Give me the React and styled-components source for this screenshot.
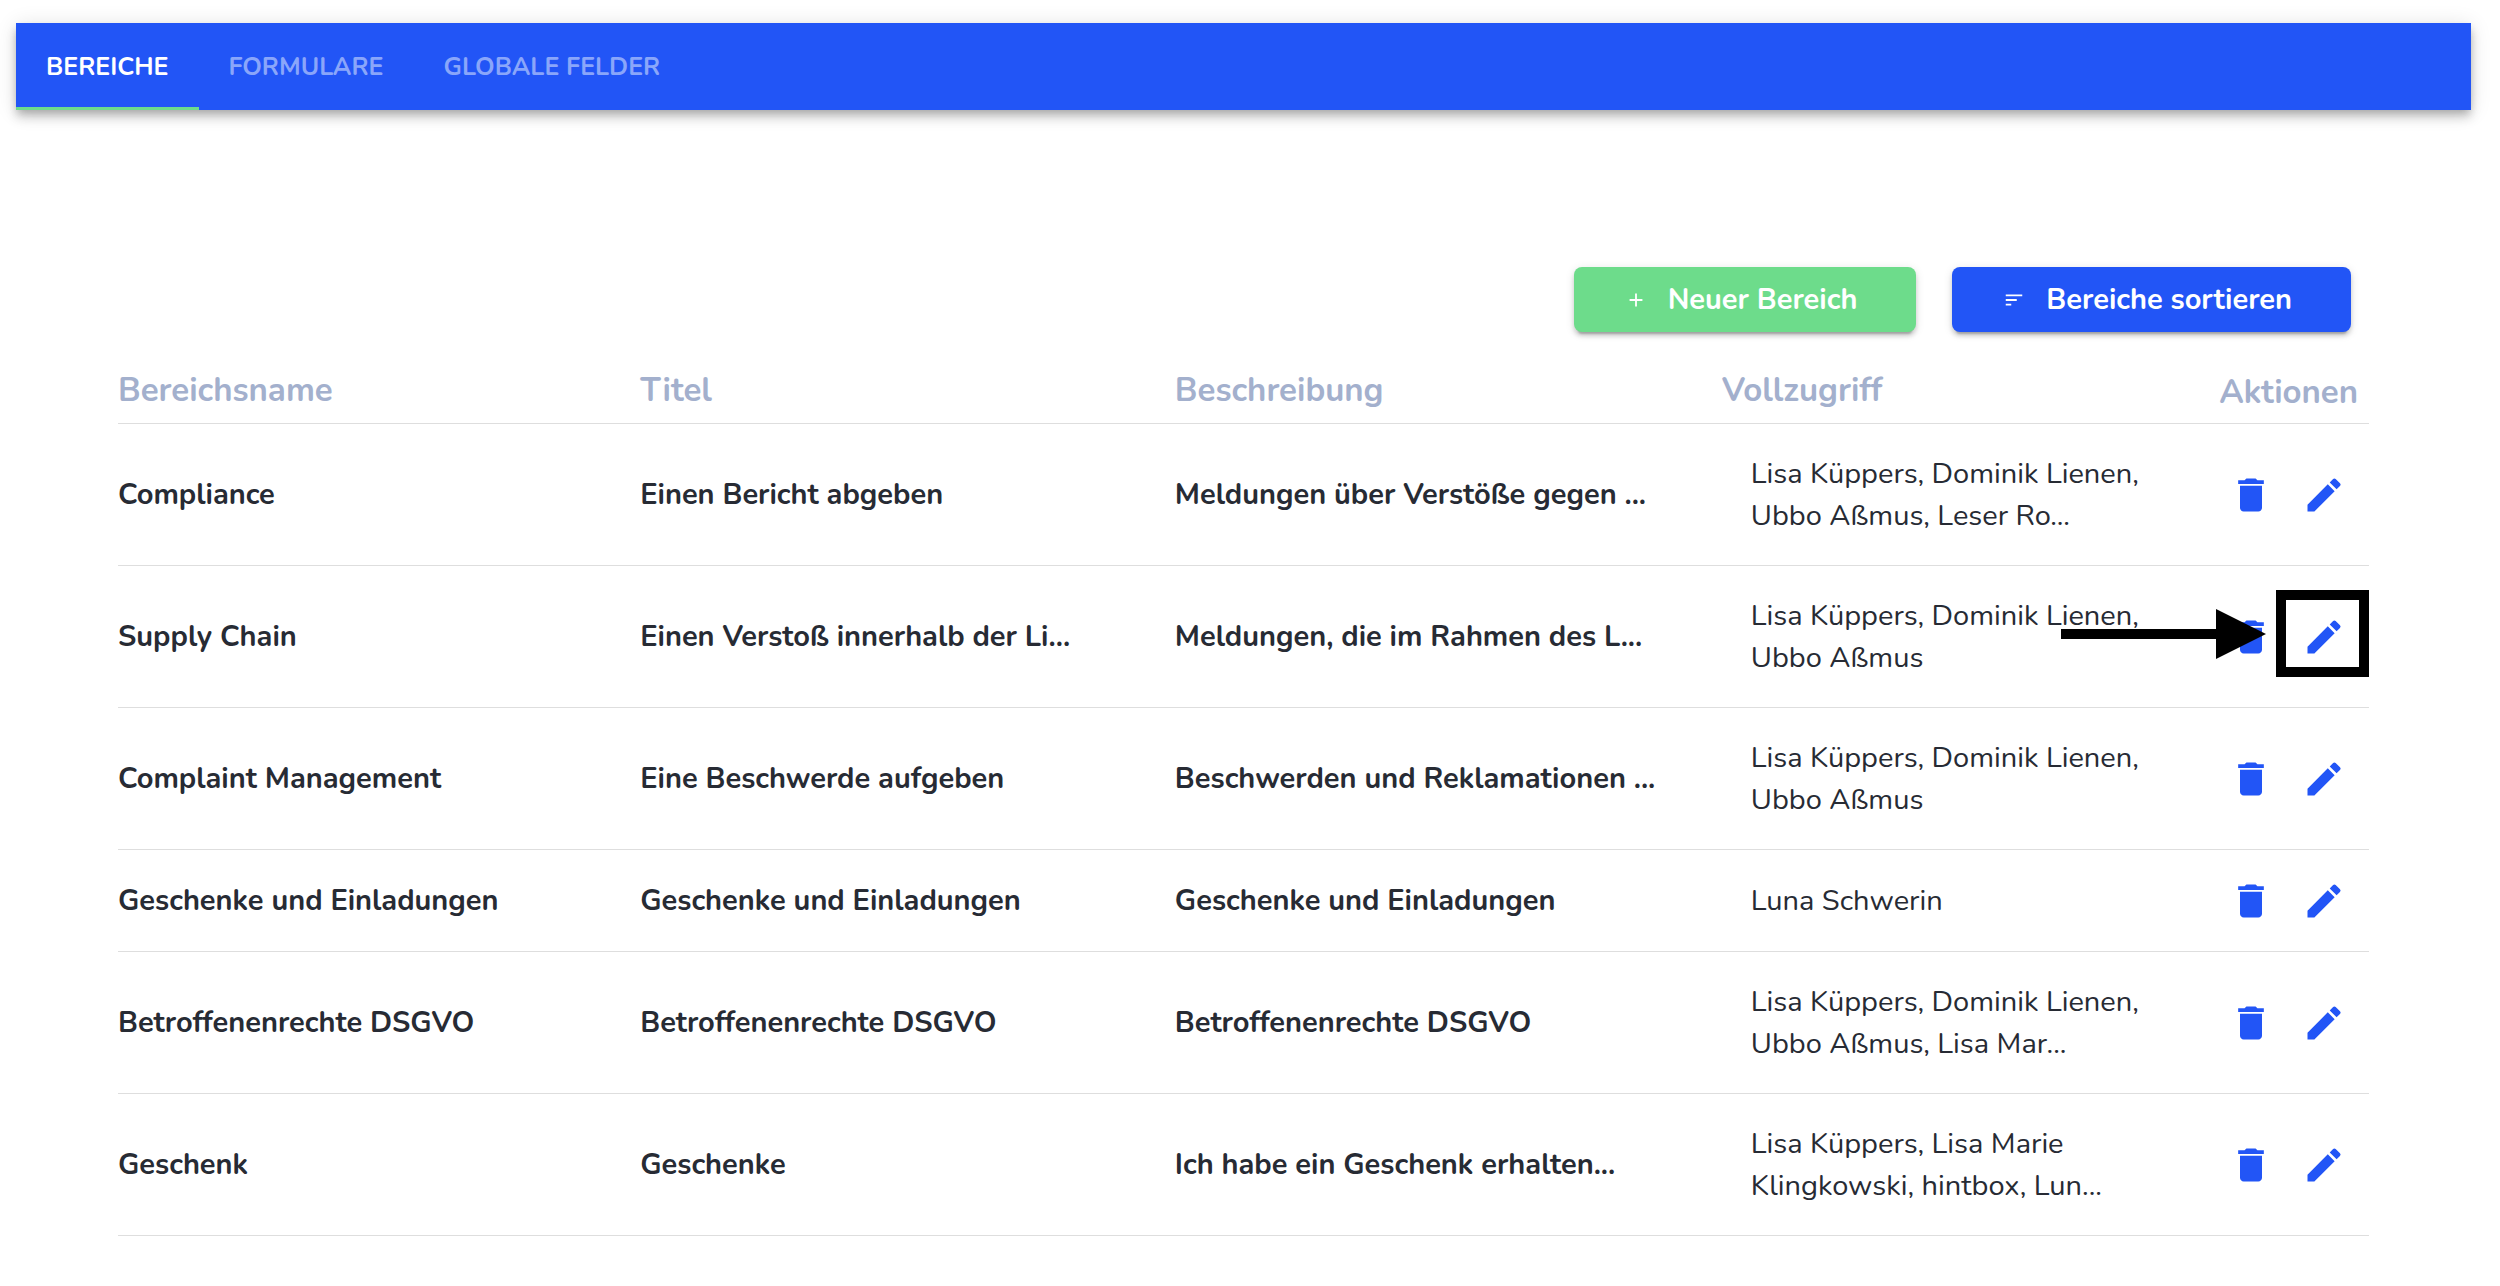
import React from 'react'
import styled, { createGlobalStyle } from 'styled-components'
import { MdAdd, MdDelete, MdEdit, MdSort } from 'react-icons/md'

const GlobalStyle = createGlobalStyle`
  * {
    box-sizing: border-box;
  }
  body {
    margin: 0;
    background-color: #fff;
    color: #272b34;
    font-family: Nunito, 'Open Sans', 'Noto Sans', sans-serif;
  }
`
const Page = styled.div`
  padding: 23px 29px 0 16px;
`
const TabBar = styled.nav`
  display: flex;
  height: 87px;
  background-color: #2255f6;
  box-shadow: 0 4px 8px -2px rgba(0, 0, 0, 0.2), 0 8px 10px rgba(0, 0, 0, 0.14), 0 2px 20px rgba(0, 0, 0, 0.12);
`
const Tab = styled.button`
  padding: 0 30px;
  border: none;
  border-top: 3px solid transparent;
  border-bottom: 3px solid ${props => (props.$active ? '#6ddc8b' : 'transparent')};
  background: none;
  color: ${props => (props.$active ? '#fff' : '#8aa6fa')};
  font-family: inherit;
  font-size: 25px;
  font-weight: 700;
  text-transform: uppercase;
  cursor: pointer;
`
const Content = styled.main`
  padding: 157px 102px 0;
`
const Actions = styled.div`
  display: flex;
  justify-content: flex-end;
  gap: 36px;
  padding-right: 18px;
`
const ActionButton = styled.button`
  display: flex;
  align-items: center;
  gap: 21px;
  height: 65px;
  padding: 0 59px 0 51px;
  border: none;
  border-radius: 8px;
  background-color: ${props => (props.$green ? '#6ddc8b' : '#2255f6')};
  box-shadow: 0 6px 2px -4px rgba(0, 0, 0, 0.2), 0 4px 4px rgba(0, 0, 0, 0.14), 0 2px 10px rgba(0, 0, 0, 0.12);
  color: #fff;
  font-family: inherit;
  font-size: 29px;
  font-weight: 700;
  cursor: pointer;
`
const Table = styled.table`
  width: 100%;
  table-layout: fixed;
  border-spacing: 0;
  text-align: left;
`
const Col = styled.col`
  width: ${props => props.$width};
`
const HeadCell = styled.th`
  height: 92px;
  padding: ${props => (props.$narrow ? '30px 0 0' : '26px 0 0')};
  border-bottom: 1px solid #dedede;
  color: #a3b0cd;
  font-size: 33px;
  font-weight: 700;
  white-space: nowrap;
`
const Cell = styled.td`
  padding: 29px 0 28px;
  border-bottom: 1px solid #dedede;
  font-size: 29px;
  font-weight: 700;
  line-height: 42px;
`
const AccessCell = styled(Cell)`
  padding-left: 29px;
  font-weight: 400;
  white-space: pre-line;
`
const IconGroup = styled.div`
  position: relative;
  display: flex;
  gap: 29px;
  padding-left: 10px;
`
const IconButton = styled.button`
  display: flex;
  padding: 0;
  border: none;
  background: none;
  color: #2255f6;
  font-size: 44px;
  cursor: pointer;
  &:hover {
    opacity: 0.7;
  }
`
const Highlight = styled.div`
  position: absolute;
  top: -25px;
  right: 0;
  width: 93px;
  height: 87px;
  border: 10px solid #000;
  pointer-events: none;
`
const Arrow = styled.svg`
  position: absolute;
  top: -6px;
  right: 103px;
  width: 205px;
  height: 50px;
  pointer-events: none;
`

const tabs = ['Bereiche', 'Formulare', 'Globale Felder']

const areas = [
  {
    name: 'Compliance',
    title: 'Einen Bericht abgeben',
    description: 'Meldungen über Verstöße gegen ...',
    access: 'Lisa Küppers, Dominik Lienen,\nUbbo Aßmus, Leser Ro...',
  },
  {
    name: 'Supply Chain',
    title: 'Einen Verstoß innerhalb der Li...',
    description: 'Meldungen, die im Rahmen des L...',
    access: 'Lisa Küppers, Dominik Lienen,\nUbbo Aßmus',
    marked: true,
  },
  {
    name: 'Complaint Management',
    title: 'Eine Beschwerde aufgeben',
    description: 'Beschwerden und Reklamationen ...',
    access: 'Lisa Küppers, Dominik Lienen,\nUbbo Aßmus',
  },
  {
    name: 'Geschenke und Einladungen',
    title: 'Geschenke und Einladungen',
    description: 'Geschenke und Einladungen',
    access: 'Luna Schwerin',
  },
  {
    name: 'Betroffenenrechte DSGVO',
    title: 'Betroffenenrechte DSGVO',
    description: 'Betroffenenrechte DSGVO',
    access: 'Lisa Küppers, Dominik Lienen,\nUbbo Aßmus, Lisa Mar...',
  },
  {
    name: 'Geschenk',
    title: 'Geschenke',
    description: 'Ich habe ein Geschenk erhalten...',
    access: 'Lisa Küppers, Lisa Marie\nKlingkowski, hintbox, Lun...',
  },
]

const AreaRow = ({ area }) => (
  <tr>
    <Cell>{area.name}</Cell>
    <Cell>{area.title}</Cell>
    <Cell>{area.description}</Cell>
    <AccessCell>{area.access}</AccessCell>
    <Cell>
      <IconGroup>
        <IconButton aria-label='Löschen'><MdDelete /></IconButton>
        <IconButton aria-label='Bearbeiten'><MdEdit /></IconButton>
        {area.marked && (
          <>
            <Arrow viewBox='0 0 205 50'>
              <path d='M0 20h155V0l50 25-50 25V30H0z' />
            </Arrow>
            <Highlight />
          </>
        )}
      </IconGroup>
    </Cell>
  </tr>
)

const App = () => {
  return (
    <Page>
      <GlobalStyle />
      <TabBar>
        {tabs.map((tab, i) => (
          <Tab key={tab} $active={i === 0}>{tab}</Tab>
        ))}
      </TabBar>
      <Content>
        <Actions>
          <ActionButton $green>
            <MdAdd size={22} />
            Neuer Bereich
          </ActionButton>
          <ActionButton>
            <MdSort size={22} />
            Bereiche sortieren
          </ActionButton>
        </Actions>
        <Table>
          <colgroup>
            <Col $width='23.2%' />
            <Col $width='23.75%' />
            <Col $width='24.3%' />
            <Col $width='22.1%' />
            <Col />
          </colgroup>
          <thead>
            <tr>
              <HeadCell>Bereichsname</HeadCell>
              <HeadCell>Titel</HeadCell>
              <HeadCell>Beschreibung</HeadCell>
              <HeadCell>Vollzugriff</HeadCell>
              <HeadCell $narrow>Aktionen</HeadCell>
            </tr>
          </thead>
          <tbody>
            {areas.map(area => (
              <AreaRow key={area.name} area={area} />
            ))}
          </tbody>
        </Table>
      </Content>
    </Page>
  )
}

export default App
